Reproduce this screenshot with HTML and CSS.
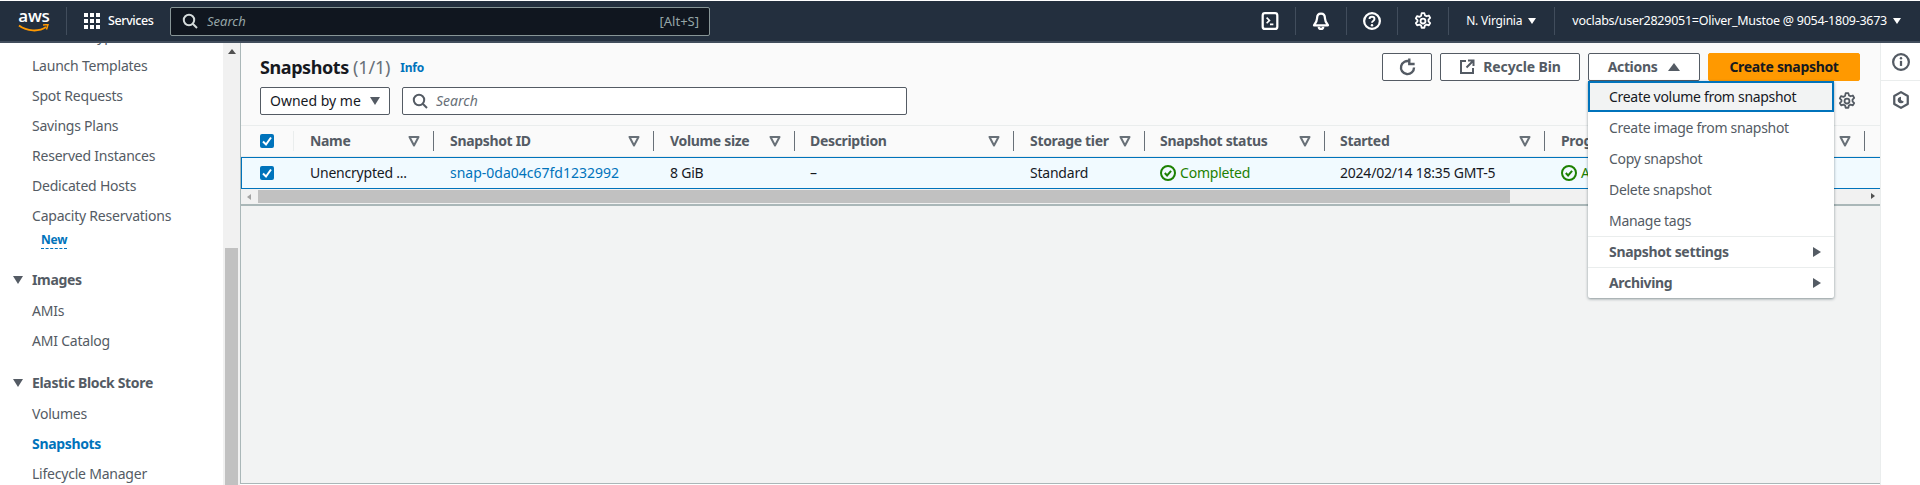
FILE: index.html
```html
<!DOCTYPE html>
<html lang="en">
<head>
<meta charset="utf-8">
<title>Snapshots | EC2</title>
<link rel="stylesheet" href="styles.css">
</head>
<body>
<svg class="defs" width="0" height="0" aria-hidden="true">
  <symbol id="sort" viewBox="0 0 12 12"><path d="M1.500 2h9L6 10.500z" fill="none" stroke="currentColor" stroke-width="2" stroke-linejoin="round"/></symbol>
  <symbol id="check" viewBox="0 0 14 14"><path d="M3 7.500l3 3 5-7" fill="none" stroke="#fff" stroke-width="2"/></symbol>
  <symbol id="ok" viewBox="0 0 16 16"><circle cx="8" cy="8" r="7" fill="none" stroke="currentColor" stroke-width="2"/><path d="M4.800 8l2.300 2.400 4-4.600" fill="none" stroke="currentColor" stroke-width="2"/></symbol>
  <symbol id="gear" viewBox="0 0 16 16"><path d="M6.800 1h2.400l.5 2 1.500.8 2-.7 1.200 2.100-1.500 1.500v1.600l1.500 1.500-1.200 2.100-2-.7-1.500.8-.5 2H6.800l-.5-2-1.500-.8-2 .7-1.200-2.100 1.500-1.500V7.200L1.600 5.700l1.200-2.100 2 .7 1.500-.8z" fill="none" stroke="currentColor" stroke-width="1.600" stroke-linejoin="round"/><circle cx="8" cy="8" r="2.200" fill="none" stroke="currentColor" stroke-width="1.600"/></symbol>
  <symbol id="mag" viewBox="0 0 16 16"><circle cx="7" cy="7" r="5.200" fill="none" stroke="currentColor" stroke-width="2"/><path d="M11 11l4 4" stroke="currentColor" stroke-width="2"/></symbol>
</svg>

<header class="topbar">
  <div class="logo"><span class="logo-word">aws</span>
    <svg class="logo-smile" viewBox="0 0 32 9"><path d="M1 1.500c8 6 20 6.500 27 1.500" fill="none" stroke="#f90" stroke-width="2"/><path d="M25 1l5-.5-1.500 5" fill="none" stroke="#f90" stroke-width="1.500"/></svg>
  </div>
  <span class="top-div logo-div"></span>
  <div class="services">
    <span class="waffle"><i></i><i></i><i></i><i></i><i></i><i></i><i></i><i></i><i></i></span>
    <span>Services</span>
  </div>
  <div class="top-search">
    <svg class="ic16"><use href="#mag"/></svg>
    <span class="ph">Search</span>
    <span class="kbd">[Alt+S]</span>
  </div>
  <div class="top-right">
    <span class="top-ic"><svg class="ic18" viewBox="0 0 16 16"><rect x="1.500" y="1" width="13" height="14" rx="2" fill="none" stroke="#fff" stroke-width="2"/><path d="M5 5l2.500 2.500L5 10M8 11h3" fill="none" stroke="#fff" stroke-width="1.500"/></svg></span>
    <span class="top-div"></span>
    <span class="top-ic"><svg class="ic18" viewBox="0 0 16 16"><path d="M8 1.500c-2.500 0-3.500 2-3.500 4S4 9 1.800 11.800h12.400C12 9 11.500 7.500 11.500 5.500s-1-4-3.500-4z" fill="none" stroke="#fff" stroke-width="2" stroke-linejoin="round"/><path d="M6 13a2 2 0 0 0 4 0" fill="none" stroke="#fff" stroke-width="2"/></svg></span>
    <span class="top-div"></span>
    <span class="top-ic"><svg class="ic18" viewBox="0 0 16 16"><circle cx="8" cy="8" r="7" fill="none" stroke="#fff" stroke-width="2"/><path d="M5.800 6.200C5.800 5 6.800 4.200 8 4.200s2.200.8 2.200 2c0 1.800-2.200 1.800-2.200 3.300" fill="none" stroke="#fff" stroke-width="1.700"/><circle cx="8" cy="11.800" r="1.100" fill="#fff"/></svg></span>
    <span class="top-div"></span>
    <span class="top-ic"><svg class="ic18 white"><use href="#gear"/></svg></span>
    <span class="top-div"></span>
    <span class="top-menu region">N. Virginia<b class="tri-down"></b></span>
    <span class="top-div"></span>
    <span class="top-menu account">voclabs/user2829051=Oliver_Mustoe @ 9054-1809-3673<b class="tri-down"></b></span>
  </div>
</header>

<div class="app">
  <nav class="sidebar">
    <div class="nav-scroll">
      <a class="nav-item">Instance Types</a>
      <a class="nav-item">Launch Templates</a>
      <a class="nav-item">Spot Requests</a>
      <a class="nav-item">Savings Plans</a>
      <a class="nav-item">Reserved Instances</a>
      <a class="nav-item">Dedicated Hosts</a>
      <a class="nav-item">Capacity Reservations</a>
      <div class="nav-new"><span class="new-tag">New</span></div>
      <div class="nav-head first"><b class="nav-tri"></b>Images</div>
      <a class="nav-item">AMIs</a>
      <a class="nav-item">AMI Catalog</a>
      <div class="nav-head"><b class="nav-tri"></b>Elastic Block Store</div>
      <a class="nav-item">Volumes</a>
      <a class="nav-item active">Snapshots</a>
      <a class="nav-item">Lifecycle Manager</a>
    </div>
    <div class="scrollbar-v">
      <b class="tri-up"></b>
      <span class="thumb-v"></span>
    </div>
  </nav>

  <main class="main">
    <section class="panel-head">
      <div class="title-row">
        <h1 class="title">Snapshots <span class="count">(1/1)</span></h1>
        <a class="info">Info</a>
        <div class="actions">
          <button class="btn btn-icon"><svg class="ic20" viewBox="0 0 16 16"><path d="M13.500 8A5.500 5.500 0 1 1 10 2.900" fill="none" stroke="currentColor" stroke-width="2"/><path d="M9.500 0.500v4.500H14" fill="none" stroke="currentColor" stroke-width="2"/></svg></button>
          <button class="btn btn-recycle"><svg class="ic16" viewBox="0 0 16 16"><path d="M7 2H2v12h12V9M9 1.500h5.500V7M14 2L7.500 8.500" fill="none" stroke="currentColor" stroke-width="2"/></svg>Recycle Bin</button>
          <div class="actions-wrap">
            <button class="btn btn-actions">Actions <b class="tri-up big"></b></button>
            <ul class="menu">
              <li class="menu-item focused">Create volume from snapshot</li>
              <li class="menu-item">Create image from snapshot</li>
              <li class="menu-item">Copy snapshot</li>
              <li class="menu-item">Delete snapshot</li>
              <li class="menu-item">Manage tags</li>
              <li class="menu-item sub">Snapshot settings<b class="tri-right"></b></li>
              <li class="menu-item sub">Archiving<b class="tri-right"></b></li>
            </ul>
          </div>
          <button class="btn btn-primary">Create snapshot</button>
        </div>
      </div>
      <div class="filter-row">
        <div class="select">Owned by me <b class="tri-down dark"></b></div>
        <div class="search"><svg class="ic16"><use href="#mag"/></svg><span class="ph">Search</span></div>
        <svg class="ic18 prefs"><use href="#gear"/></svg>
      </div>
    </section>

    <section class="table">
      <div class="tr thead">
        <div class="td c0"><span class="cb"><svg><use href="#check"/></svg></span></div>
        <div class="td c1">Name<svg class="sort"><use href="#sort"/></svg></div>
        <div class="td c2">Snapshot ID<svg class="sort"><use href="#sort"/></svg></div>
        <div class="td c3">Volume size<svg class="sort"><use href="#sort"/></svg></div>
        <div class="td c4">Description<svg class="sort"><use href="#sort"/></svg></div>
        <div class="td c5">Storage tier<svg class="sort"><use href="#sort"/></svg></div>
        <div class="td c6">Snapshot status<svg class="sort"><use href="#sort"/></svg></div>
        <div class="td c7">Started<svg class="sort"><use href="#sort"/></svg></div>
        <div class="td c8">Progress<svg class="sort"><use href="#sort"/></svg></div>
      </div>
      <div class="tr row-selected">
        <div class="td c0"><span class="cb"><svg><use href="#check"/></svg></span></div>
        <div class="td c1">Unencrypted ...</div>
        <div class="td c2"><a class="link">snap-0da04c67fd1232992</a></div>
        <div class="td c3">8 GiB</div>
        <div class="td c4">–</div>
        <div class="td c5">Standard</div>
        <div class="td c6 ok"><svg class="ic16"><use href="#ok"/></svg>Completed</div>
        <div class="td c7">2024/02/14 18:35 GMT-5</div>
        <div class="td c8 ok"><svg class="ic16"><use href="#ok"/></svg>Available (100%)</div>
      </div>
      <div class="scrollbar-h">
        <b class="tri-left"></b>
        <span class="thumb-h"></span>
        <b class="tri-right small"></b>
      </div>
    </section>
  </main>

  <aside class="rail">
    <div class="rail-item"><svg class="ic18" viewBox="0 0 16 16"><circle cx="8" cy="8" r="7" fill="none" stroke="currentColor" stroke-width="2"/><path d="M8 7v4.500" stroke="currentColor" stroke-width="2"/><circle cx="8" cy="4.600" r="1.100" fill="currentColor"/></svg></div>
    <div class="rail-item"><svg class="ic18" viewBox="0 0 16 16"><path d="M8 1l6 3.500v7L8 15l-6-3.500v-7z" fill="none" stroke="currentColor" stroke-width="2" stroke-linejoin="round"/><path d="M8 5a3 3 0 1 0 2.600 4.500L8 8z" fill="currentColor"/></svg></div>
  </aside>
</div>
</body>
</html>
```
FILE: styles.css
```css
* { box-sizing: border-box; }
html, body { margin: 0; height: 485px; overflow: hidden; }
body { font: 14px/20px "Noto Sans", "Open Sans", sans-serif; letter-spacing: -.22px; color: #16191f; background: #fff; display: flex; flex-direction: column; padding-top: 1px; }
.defs { position: absolute; }
svg { display: block; flex: none; }
button { font: inherit; letter-spacing: -.33px; }

.ic16 { width: 16px; height: 16px; }
.ic18 { width: 18px; height: 18px; }
.ic20 { width: 19px; height: 19px; }
.white { color: #fff; }

/* top bar */
.topbar { flex: none; height: 42px; background: #232f3e; border-bottom: 2px solid #414d5c; display: flex; align-items: center; color: #fff; font-size: 13px; letter-spacing: 0; }
.logo { width: 32px; margin-left: 18px; position: relative; height: 28px; }
.logo-word { display: block; font: 600 17px/18px "Open Sans", sans-serif; text-align: center; letter-spacing: -.2px; }
.logo-smile { width: 32px; height: 9px; position: absolute; top: 17px; left: 0; }
.top-div { width: 1px; height: 28px; background: #414d5c; flex: none; }
.logo-div { margin-left: 16px; }
.services { display: flex; align-items: center; gap: 8px; margin-left: 17px; width: 86px; font-size: 12.500px; font-weight: 500; letter-spacing: -.4px; }
.waffle { display: grid; grid-template-columns: repeat(3, 4px); gap: 2px; flex: none; }
.waffle i { width: 4px; height: 4px; background: #fff; }
.top-search { width: 540px; height: 29px; background: #10161f; border: 1px solid #879596; border-radius: 2px; display: flex; align-items: center; padding: 0 10px 0 11px; color: #d5dbdb; }
.top-search .ph { margin-left: 9px; font-style: italic; color: #95a5a6; }
.top-search .kbd { margin-left: auto; color: #95a5a6; }
.top-right { margin-left: auto; display: flex; align-items: center; height: 100%; }
.top-ic { width: 50px; display: flex; justify-content: center; }
.top-menu { display: flex; align-items: center; white-space: pre; font-size: 12.500px; letter-spacing: -.26px; }
.region { font-size: 12px; letter-spacing: -.2px; padding: 0 18px 0 17px; }
.region .tri-down { margin-left: 6px; }
.account { padding: 0 19px 0 17px; }
.tri-down { width: 0; height: 0; border: 4.500px solid transparent; border-top: 6px solid #fff; border-bottom: 0; margin-left: 6px; }
.tri-down.dark { border-width: 8px 5.500px 0; border-top-color: #545b64; margin-left: 9px; }

/* layout */
.app { flex: 1; min-height: 0; display: flex; }
.sidebar { width: 240px; flex: none; display: flex; overflow: hidden; }
.nav-scroll { flex: 1; margin-top: -22px; color: #545b64; }
.nav-item { display: block; height: 30px; line-height: 30px; padding-left: 32px; white-space: nowrap; }
.nav-item.active { color: #0073bb; font-weight: 700; letter-spacing: -.33px; }
.nav-new { height: 17px; padding-left: 41px; line-height: 16px; }
.new-tag { display: inline-block; height: 17px; font-size: 12px; font-weight: 700; color: #0073bb; border-bottom: 1px dashed #0073bb; }
.nav-head { height: 31px; line-height: 30px; font-weight: 700; letter-spacing: -.33px; color: #545b64; padding-left: 32px; position: relative; margin-top: 12px; }
.nav-head.first { margin-top: 17px; }
.nav-tri { position: absolute; left: 13px; top: 11px; width: 0; height: 0; border: 5px solid transparent; border-top: 8px solid #545b64; border-bottom: 0; }
.scrollbar-v { width: 17px; flex: none; background: #f1f1f1; padding: 0 2px; display: flex; flex-direction: column; align-items: center; position: relative; }
.scrollbar-v .tri-up { margin-top: 6px; border-width: 0 4px 5px; border-bottom-color: #505050; }
.thumb-v { position: absolute; top: 205px; left: 2px; right: 2px; bottom: 0; background: #c1c1c1; }
.tri-up { width: 0; height: 0; border-style: solid; border-color: transparent; flex: none; }
.tri-up.big { border-width: 0 6px 8px; border-bottom-color: #545b64; margin-left: 11px; }

/* main */
.main { flex: 1; min-width: 0; background: #f2f3f3; border-left: 1px solid #aab7b8; border-bottom: 1px solid #aab7b8; margin-bottom: 1px; }
.panel-head { height: 82px; background: #fafafa; padding: 0 20px 0 19px; display: flex; flex-direction: column; }
.title-row { display: flex; align-items: flex-start; height: 44px; padding-top: 10px; }
.title { margin: 0; font-size: 18px; line-height: 28px; font-weight: 700; letter-spacing: -.42px; }
.count { font-weight: 400; color: #687078; letter-spacing: -.2px; }
.info { margin: 5px 0 0 10px; font-size: 12px; line-height: 20px; font-weight: 700; color: #0073bb; }
.actions { margin-left: auto; display: flex; gap: 8px; }
.btn { height: 28px; padding: 0; background: #fff; border: 1px solid #545b64; border-radius: 2px; color: #545b64; font-weight: 700; display: flex; align-items: center; justify-content: center; white-space: nowrap; }
.btn-icon { width: 50px; }
.btn-recycle { width: 140px; gap: 8px; letter-spacing: -.1px; }
.btn-actions { width: 112px; }
.btn-primary { width: 152px; background: #ff9900; border-color: #ff9900; color: #16191f; }
.actions-wrap { position: relative; }
.menu { position: absolute; z-index: 5; top: 28px; left: 0; width: 246px; margin: 0; padding: 0; list-style: none; background: #fff; box-shadow: 0 1px 3px rgba(0, 28, 36, .45); border-radius: 0 0 2px 2px; color: #545b64; letter-spacing: -.3px; }
.menu-item { height: 31px; line-height: 32px; padding-left: 21px; white-space: nowrap; }
.menu-item.focused { background: #f2f3f3; border: 2px solid #0073bb; color: #16191f; line-height: 28px; padding-left: 19px; }
.menu-item.sub { font-weight: 700; letter-spacing: -.33px; border-top: 1px solid #eaeded; display: flex; align-items: center; justify-content: space-between; padding-right: 13px; }
.tri-right { width: 0; height: 0; border: 5.500px solid transparent; border-left: 8px solid #545b64; border-right: 0; flex: none; }
.tri-right.small { border-width: 3.500px 0 3.500px 4px; border-left-color: #505050; }
.tri-left { width: 0; height: 0; border: 3.500px solid transparent; border-right: 4px solid #a3a3a3; border-left: 0; flex: none; margin: 0 5px 0 6px; }

.filter-row { display: flex; align-items: center; gap: 12px; height: 28px; letter-spacing: 0; }
.select { width: 130px; height: 28px; background: #fff; border: 1px solid #545b64; border-radius: 2px; display: flex; align-items: center; padding-left: 9px; color: #16191f; }
.search { width: 505px; height: 28px; background: #fff; border: 1px solid #545b64; border-radius: 2px; display: flex; align-items: center; padding-left: 9px; color: #545b64; gap: 8px; }
.ph { font-style: italic; color: #687078; }
.prefs { margin-left: auto; margin-right: 4px; color: #545b64; }

/* table */
.table { border-top: 1px solid #eaeded; border-bottom: 2px solid #aab7b8; background: #fafafa; }
.tr { display: grid; grid-template-columns: 53px 140px 220px 141px 219px 131px 180px 220px 320px 1fr; align-items: center; }
.td { display: flex; align-items: center; padding-left: 16px; white-space: nowrap; overflow: hidden; }
.td.c4, .td.c6, .td.c7 { padding-left: 15px; }
.thead { height: 31px; color: #545b64; font-weight: 700; letter-spacing: -.33px; border-bottom: 1px solid #eaeded; }
.thead .td { height: 20px; border-right: 1px solid #687078; }
.thead .td.c0 { border-right-color: #eaeded; }
.sort { width: 12px; height: 12px; margin-left: auto; margin-right: 13px; color: #687078; }
.td.c0 { padding-left: 19px; }
.cb { width: 14px; height: 14px; background: #0073bb; border-radius: 2px; display: block; }
.cb svg { width: 14px; height: 14px; }
.row-selected { height: 32px; background: #f1faff; border-top: 1px solid #0073bb; border-bottom: 1px solid #0073bb; box-shadow: inset 1px 0 0 #0073bb; }
.link { color: #0073bb; letter-spacing: 0; }
.ok { color: #1d8102; gap: 4px; }
.scrollbar-h { height: 15px; background: #f1f1f1; display: flex; align-items: center; position: relative; }
.thumb-h { position: absolute; left: 17px; width: 1252px; top: 1px; bottom: 1px; background: #c1c1c1; }
.scrollbar-h .tri-right { position: absolute; right: 5px; top: 4px; }

/* right rail */
.rail { width: 40px; flex: none; border-left: 1px solid #eaeded; color: #545b64; }
.rail-item { height: 38px; display: flex; align-items: center; justify-content: center; border-bottom: 1px solid #eaeded; }
.rail-item:last-child { border-bottom: 0; }
```
